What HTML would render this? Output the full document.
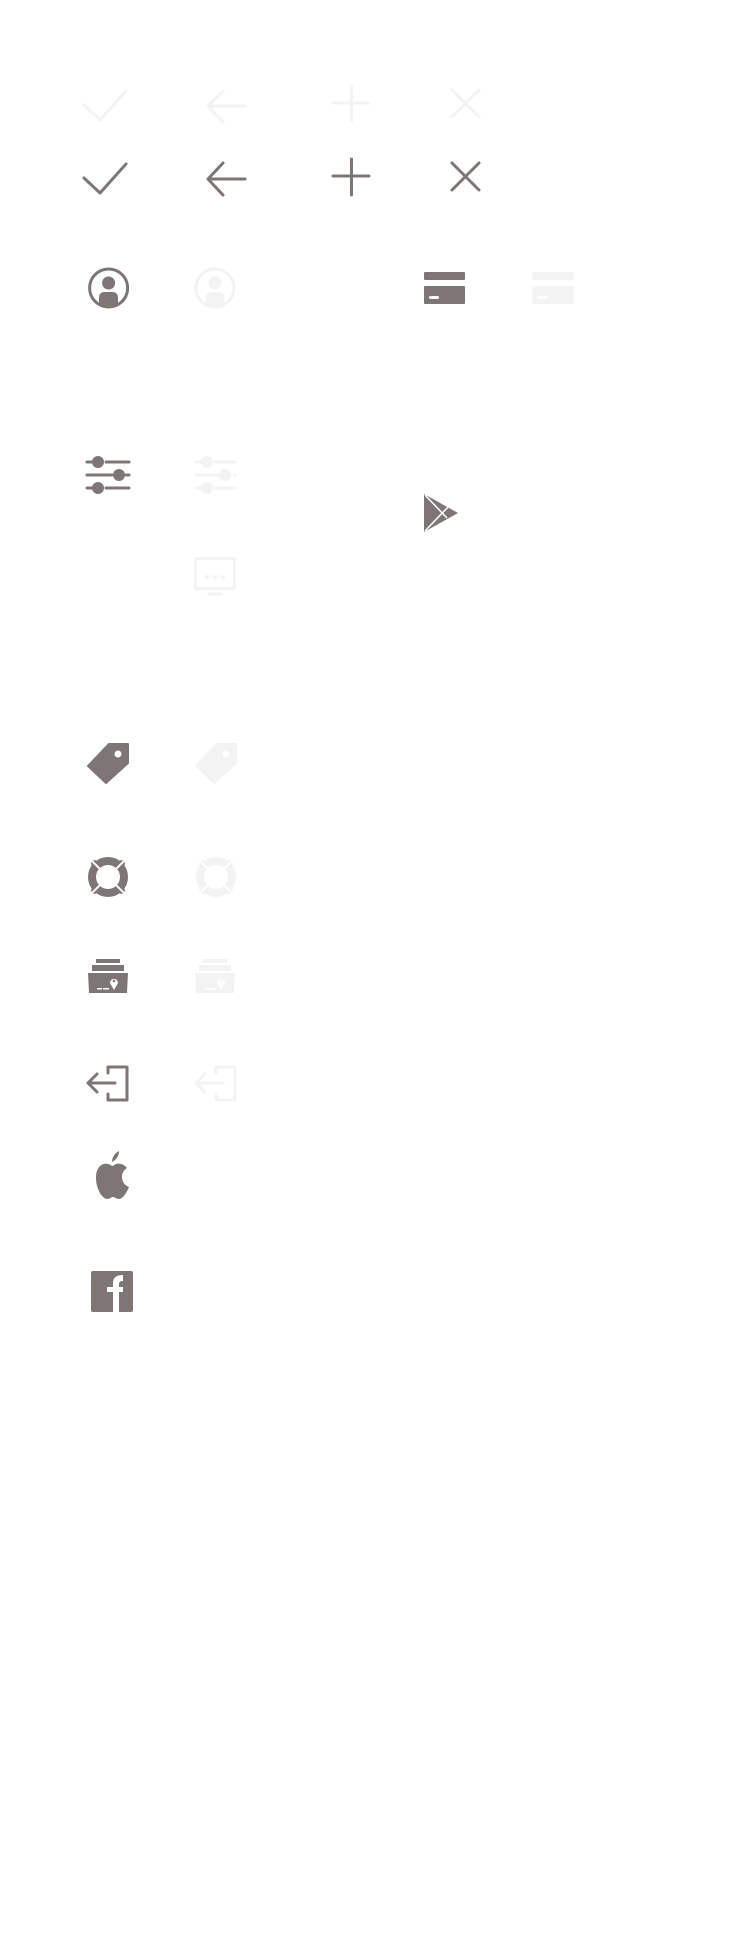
<!DOCTYPE html>
<html><head><meta charset="utf-8"><style>
html,body{margin:0;padding:0;background:#fff;}
svg{display:block;}
</style></head><body>
<svg width="750" height="1957" viewBox="0 0 750 1957" xmlns="http://www.w3.org/2000/svg">
<g fill="none" stroke-width="3" stroke-linecap="round" stroke-linejoin="round">
  <g stroke="#f3f3f3">
    <path d="M84,105 L100,120 L126,91"/>
    <path d="M245,106 L208,106 M223,91 L208,106 L223,122"/>
    <path d="M351.5,86 V121 M333,103 H369"/>
    <path d="M452,90 L479,117 M479,90 L452,117"/>
  </g>
  <g stroke="#7d7675">
    <path d="M84,178 L100,193 L126,164"/>
    <path d="M245,179 L208,179 M223,163 L208,179 L223,195"/>
    <path d="M351.5,159 V195 M333,176 H369"/>
    <path d="M452,163 L479,190 M479,163 L452,190"/>
  </g>
</g>
<defs>
  <clipPath id="c1"><circle cx="108.6" cy="288" r="18.5"/></clipPath>
  <clipPath id="c2"><circle cx="215" cy="288" r="18.5"/></clipPath>
</defs>
<g fill="#7d7675">
  <circle cx="108.6" cy="288" r="19" fill="none" stroke="#7d7675" stroke-width="3"/>
  <circle cx="108.6" cy="283" r="6.5"/>
  <rect x="99" y="292" width="19" height="20" rx="5" clip-path="url(#c1)"/>
</g>
<g fill="#f3f3f3">
  <circle cx="215" cy="288" r="19" fill="none" stroke="#f3f3f3" stroke-width="3"/>
  <circle cx="215" cy="283" r="6.5"/>
  <rect x="205.5" y="292" width="19" height="20" rx="5" clip-path="url(#c2)"/>
</g>
<g>
  <rect x="424" y="272" width="41" height="8" rx="1" fill="#7d7675"/>
  <rect x="424" y="286" width="41" height="18" rx="1" fill="#7d7675"/>
  <rect x="429" y="296" width="10" height="3" rx="1.5" fill="#fff"/>
  <rect x="532.5" y="272" width="41" height="8" rx="1" fill="#f3f3f3"/>
  <rect x="532.5" y="286" width="41" height="18" rx="1" fill="#f3f3f3"/>
  <rect x="537.5" y="296" width="10" height="3" rx="1.5" fill="#fff"/>
</g>
<g stroke-width="3" stroke-linecap="round">
  <g stroke="#7d7675" fill="#7d7675">
    <path d="M87,462 H92 M106,462 H129 M87,475 H112 M126,475 H129 M87,488 H92 M106,488 H129"/>
    <circle cx="98" cy="462" r="4.5"/><circle cx="119" cy="475" r="4.5"/><circle cx="98" cy="488" r="4.5"/>
  </g>
  <g stroke="#f3f3f3" fill="#f3f3f3">
    <path d="M196,462 H201 M215,462 H235 M196,475 H221 M235,475 H235 M196,488 H201 M215,488 H235"/>
    <circle cx="207" cy="462" r="4.5"/><circle cx="225" cy="475" r="4.5"/><circle cx="207" cy="488" r="4.5"/>
  </g>
</g>
<path d="M424,494 L424,532 L458,513 Z" fill="#7d7675"/>
<path d="M425,495 L447,518 M425,531 L448,507" stroke="#fff" stroke-width="1.5"/>
<g stroke="#f3f3f3" stroke-width="3" fill="none" stroke-linecap="round">
  <rect x="195.5" y="558.5" width="39" height="30" rx="1"/>
  <path d="M209,594 H221"/>
</g>
<g fill="#f3f3f3"><circle cx="207" cy="577" r="2"/><circle cx="215" cy="577" r="2"/><circle cx="223" cy="577" r="2"/></g>
<path d="M88,766 L109,744 L128,744 L128,763 L106,783 Z" fill="#7d7675" stroke="#7d7675" stroke-width="2" stroke-linejoin="round"/>
<circle cx="118" cy="754" r="3.5" fill="#fff"/>
<path d="M196,766 L217,744 L236,744 L236,763 L214,783 Z" fill="#f3f3f3" stroke="#f3f3f3" stroke-width="2" stroke-linejoin="round"/>
<circle cx="226" cy="754" r="3.5" fill="#fff"/>
<g>
  <circle cx="108" cy="877" r="16" fill="none" stroke="#7d7675" stroke-width="8"/>
  <path d="M96.7,865.7 L94.6,863.6 M119.3,865.7 L121.4,863.6 M96.7,888.3 L94.6,890.4 M119.3,888.3 L121.4,890.4" stroke="#7d7675" stroke-width="7" stroke-linecap="round"/>
  <path d="M91,860 L100,869 M125,860 L116,869 M91,894 L100,885 M125,894 L116,885" stroke="#fff" stroke-width="2"/>
  <circle cx="216" cy="877" r="16" fill="none" stroke="#f3f3f3" stroke-width="8"/>
  <path d="M204.7,865.7 L202.6,863.6 M227.3,865.7 L229.4,863.6 M204.7,888.3 L202.6,890.4 M227.3,888.3 L229.4,890.4" stroke="#f3f3f3" stroke-width="7" stroke-linecap="round"/>
  <path d="M199,860 L208,869 M233,860 L224,869 M199,894 L208,885 M233,894 L224,885" stroke="#fff" stroke-width="2"/>
</g>
<g fill="#7d7675">
  <rect x="96" y="959" width="24" height="4"/>
  <rect x="92" y="965" width="32" height="6"/>
  <path d="M88,973 H128 L127,993 H89 Z"/>
</g>
<g fill="#f3f3f3">
  <rect x="203" y="959" width="24" height="4"/>
  <rect x="199" y="965" width="32" height="6"/>
  <path d="M195,973 H235 L234,993 H196 Z"/>
</g>
<g fill="#fff">
  <rect x="97" y="988" width="5" height="1.5"/><rect x="103" y="988" width="6" height="1.5"/>
  <path d="M114,990 L110,983 A4,4 0 1 1 118,983 Z"/>
  <rect x="204" y="988" width="5" height="1.5"/><rect x="210" y="988" width="6" height="1.5"/>
  <path d="M221,990 L217,983 A4,4 0 1 1 225,983 Z"/>
</g>
<circle cx="114" cy="981" r="1.3" fill="#7d7675"/>
<circle cx="221" cy="981" r="1.3" fill="#f3f3f3"/>
<g fill="none" stroke-width="3" stroke-linecap="round" stroke-linejoin="round">
  <g stroke="#7d7675">
    <path d="M108,1073 V1067 H127 V1100 H108 V1094"/>
    <path d="M115,1083 H88 M97,1074 L88,1083 L97,1092"/>
  </g>
  <g stroke="#f3f3f3">
    <path d="M216,1073 V1067 H235 V1100 H216 V1094"/>
    <path d="M223,1083 H196 M205,1074 L196,1083 L205,1092"/>
  </g>
</g>
<g fill="#7d7675">
  <path d="M112,1166 C108,1162 96,1162 96,1178 C96,1190 103,1199 107,1199 C110,1199 111,1197 113,1197 C115,1197 116,1199 119,1199 C123,1199 127,1192 129,1187 C124,1185 122,1181 122,1177 C122,1173 124,1170 127,1168 C124,1164 119,1163 116,1164 C114,1165 113,1166 112,1166 Z"/>
  <path d="M112,1162 C112,1157 115,1153 119,1151 C119,1156 116,1160 112,1162 Z"/>
</g>
<rect x="91" y="1271" width="42" height="41" rx="2" fill="#7d7675"/>
<path d="M113,1312 V1283 C113,1277 117,1275 123,1275 V1281 C120,1281 119,1282 119,1285 V1312 Z M107,1287 H123 V1292 H107 Z" fill="#fff"/>
</svg>
</body></html>
